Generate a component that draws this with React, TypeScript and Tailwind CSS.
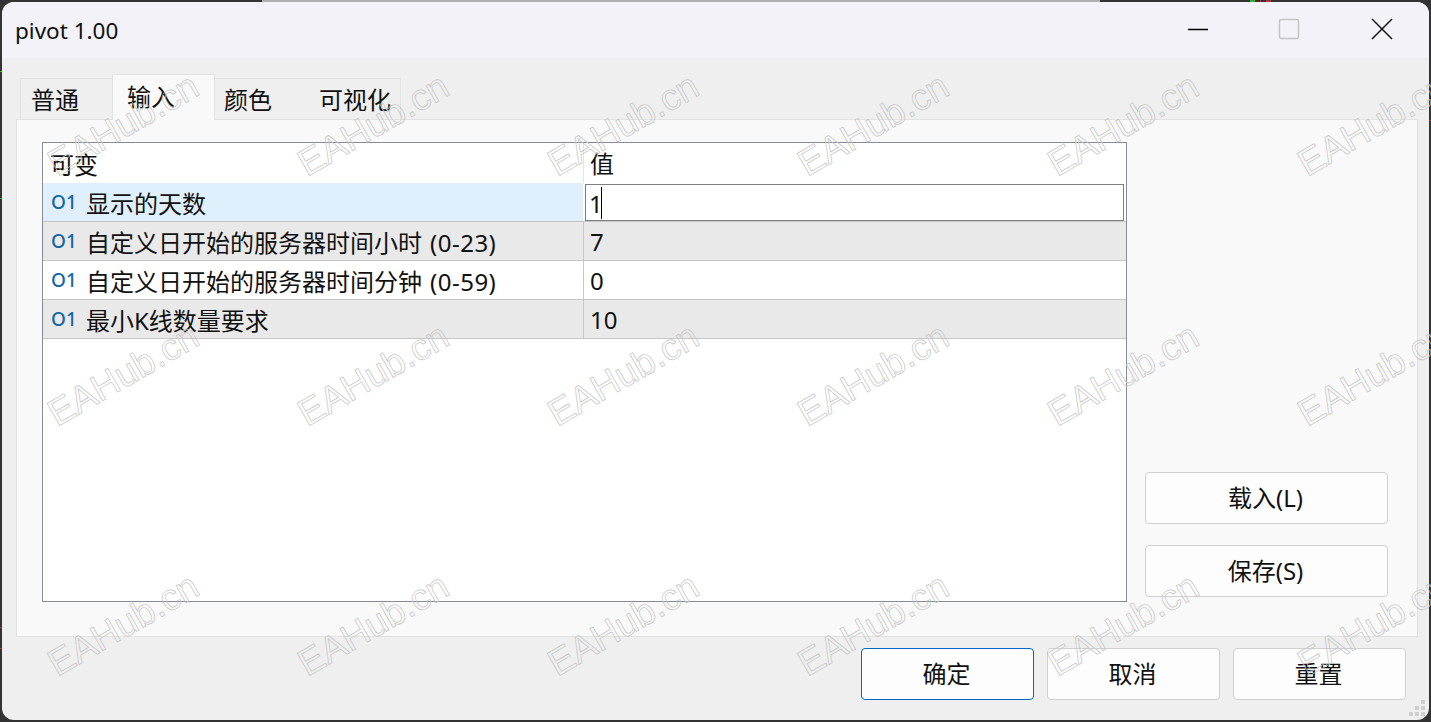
import React from 'react';

const cjk = "font-['Noto_Sans','Noto_Sans_CJK_SC',sans-serif]";

const tabs = [
  { label: '普通', cls: 'w-[92px] h-[42px] pl-[10px] pt-[3px] border-l' },
  { label: '输入', cls: 'w-[103px] h-[46px] pl-[14px] pt-[4px] bg-[#f9f9f9] border-l border-r' },
  { label: '颜色', cls: 'w-[92px] h-[42px] pl-[9px] pt-[3px]' },
  { label: '可视化', cls: 'w-[94px] h-[42px] pl-[12px] pt-[3px] border-r' },
];

const rows = [
  { name: '显示的天数', value: '1', bg: 'bg-[#dfeffc]', editing: true },
  { name: '自定义日开始的服务器时间小时', range: '(0-23)', value: '7', bg: 'bg-[#e9e9e9]' },
  { name: '自定义日开始的服务器时间分钟', range: '(0-59)', value: '0', bg: 'bg-white' },
  { name: '最小K线数量要求', value: '10', bg: 'bg-[#e9e9e9]' },
];

// specks of the chart window showing around the dialog
const specks = [
  'left-0 top-[71px] w-[2px] h-px bg-[#3cb043]',
  'left-0 top-[198px] w-[2px] h-px bg-[#3cb043]',
  'left-0 top-[627px] w-[2px] h-px bg-[#c03030]',
  'left-0 top-[648px] w-[2px] h-px bg-[#c03030]',
  'right-0 top-[120px] w-[2px] h-px bg-[#c03030]',
  'left-[1250px] top-0 w-[5px] h-[2px] bg-[#2fb12f]',
  'left-[1260px] top-0 w-px h-[2px] bg-[#b03030]',
  'left-[1266px] top-0 w-[5px] h-[2px] bg-[#b03030]',
];

function Tabs() {
  return (
    <div className="flex items-end h-[47px] ml-[18px] -mb-px relative">
      {tabs.map((t) => (
        <div key={t.label} className={`${t.cls} border-t border-[#e2e2e2] text-[24px] leading-[36px]`}>
          {t.label}
        </div>
      ))}
    </div>
  );
}

function Row({ name, range, value, bg, editing }: { name: string; range?: string; value: string; bg: string; editing?: boolean }) {
  return (
    <div className={`flex h-[39px] border-b border-[#c6c6c6] ${bg}`}>
      <div className="w-[540px] flex items-center pl-[8px] shrink-0">
        <span className="w-[35px] text-[#1268a6] text-[19px] font-medium leading-[20px] -mt-[1px]">O1</span>
        <span className="text-[24px] whitespace-nowrap pt-[3px]">{name}</span>
        {range && <span className="text-[24px] whitespace-nowrap pt-[3px] ml-[8px] tracking-[0.5px]">{range}</span>}
      </div>
      {editing ? (
        <div className="flex-1 px-[2px] pt-px bg-white">
          <div className="h-[37px] border border-[#7f7f7f] bg-white flex items-center pl-[3px]">
            <span className="text-[24px] pt-[2px]">{value}</span>
            <span className="w-px h-[32px] bg-black -ml-[2px]" />
          </div>
        </div>
      ) : (
        <div className="flex-1 border-l border-[#c6c6c6] pl-[6px] pt-[2px] flex items-center text-[24px]">{value}</div>
      )}
    </div>
  );
}

function Btn({ label, cls }: { label: string; cls: string }) {
  return (
    <div className={`${cls} h-[52px] rounded-[4px] border bg-[#fdfdfd] flex items-center justify-center text-[24px] pr-[2px]`}>
      {label}
    </div>
  );
}

export default function App() {
  return (
    <div className={`relative w-[1431px] h-[722px] overflow-hidden bg-[#333333] ${cjk} text-[#111]`}>
      <div className="absolute left-[262px] top-0 w-[838px] h-[2px] bg-[#b0b0b0]" />
      {specks.map((s) => (
        <div key={s} className={`absolute ${s}`} />
      ))}

      <div className="absolute inset-x-[2px] top-[2px] bottom-[2px] rounded-[12px] overflow-hidden bg-[#efefef] flex flex-col">
        {/* Title bar */}
        <div className="h-[56px] bg-[#f2f2f8] flex items-center pl-[13px] shrink-0">
          <span className="text-[22.5px] flex-1 pt-[2px]">pivot 1.00</span>
          <svg width="241" height="56" viewBox="0 0 241 56">
            <line x1="0" y1="27.5" x2="20" y2="27.5" stroke="#000" strokeWidth="1.5" />
            <rect x="91.5" y="17.5" width="19" height="19" rx="2" fill="none" stroke="#c4c4c4" strokeWidth="1.5" />
            <path d="M184 17 L204 37 M204 17 L184 37" stroke="#111" strokeWidth="1.5" fill="none" />
          </svg>
        </div>

        <div className="pt-[15px] px-[14px] shrink-0">
          <div className="-ml-[14px]"><Tabs /></div>
          <div className="w-[1402px] h-[518px] bg-[#f9f9f9] border border-[#e2e2e2] flex pl-[25px] pt-[22px] pb-[34px]">
            {/* Parameter table */}
            <div className="w-[1085px] h-[460px] border border-[#868b96] bg-white flex flex-col shrink-0">
              <div className="flex h-[40px] text-[24px] items-center">
                <div className="w-[540px] pl-[7px] pt-[3px]">可变</div>
                <div className="pl-[6px] pt-[3px] h-full border-l border-[#e4e4e4]">值</div>
              </div>
              {rows.map((r) => (
                <Row key={r.name} {...r} />
              ))}
            </div>
            <div className="flex flex-col justify-end gap-[21px] ml-[18px] h-[455px]">
              <Btn label="载入(L)" cls="w-[243px] border-[#d0d0d0]" />
              <Btn label="保存(S)" cls="w-[243px] border-[#d0d0d0]" />
            </div>
          </div>
        </div>

        <div className="flex justify-end gap-[13px] pr-[23px] pt-[11px]">
          <Btn label="确定" cls="w-[173px] border-[#0067c0]" />
          <Btn label="取消" cls="w-[173px] border-[#d0d0d0]" />
          <Btn label="重置" cls="w-[173px] border-[#d0d0d0]" />
        </div>

        {/* Resize grip */}
        <svg className="absolute right-[3px] bottom-[3px]" width="17" height="17" viewBox="0 0 17 17" fill="#cfcfcf">
          <rect x="12" y="0" width="4" height="4" />
          <rect x="6" y="6" width="4" height="4" />
          <rect x="12" y="6" width="4" height="4" />
          <rect x="0" y="12" width="4" height="4" />
          <rect x="6" y="12" width="4" height="4" />
          <rect x="12" y="12" width="4" height="4" />
        </svg>
      </div>

      {/* Watermark */}
      <div className="absolute -left-[2px] top-0 grid grid-cols-[repeat(6,250px)] grid-rows-[repeat(3,250px)] pointer-events-none">
        {Array.from({ length: 18 }).map((_, i) => (
          <div key={i} className="flex items-center justify-center">
            <span className="font-['Liberation_Sans',sans-serif] text-[37px] whitespace-nowrap text-transparent [-webkit-text-stroke:0.7px_#c4c4c4] -rotate-30">
              EAHub.cn
            </span>
          </div>
        ))}
      </div>
    </div>
  );
}
